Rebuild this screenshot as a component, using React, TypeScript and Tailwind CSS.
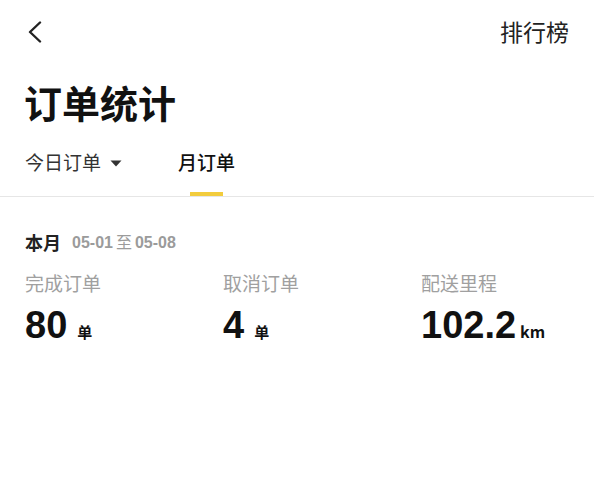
import React from 'react'

const CJK = '"Noto Sans CJK SC", "Liberation Sans", sans-serif'
const NUM = '"Liberation Sans", "Noto Sans CJK SC", sans-serif'

const stats = [
  { label: '完成订单', value: '80', unit: '单', gap: 'ml-[10px]', size: 'text-[15px]' },
  { label: '取消订单', value: '4', unit: '单', gap: 'ml-[10px]', size: 'text-[15px]' },
  { label: '配送里程', value: '102.2', unit: 'km', gap: 'ml-[4px]', size: 'text-[16px]' },
]

export default function App() {
  return (
    <div className="w-[594px] h-[500px] bg-white text-[#151515]" style={{ fontFamily: CJK }}>
      {/* top bar */}
      <div className="h-[62px] flex items-center justify-between pl-[27px] pr-[25px]">
        <svg width="16" height="22" viewBox="0 0 16 22" fill="none" className="mt-[2px]">
          <path d="M13 1.5 L3 11 L13 20.5" stroke="#222" strokeWidth="2.4" strokeLinecap="round" strokeLinejoin="round" />
        </svg>
        <span className="text-[23px] leading-none text-[#222]">排行榜</span>
      </div>

      <h1 className="mt-[21px] pl-[24px] text-[38px] leading-none font-bold text-[#111]">订单统计</h1>

      {/* tabs */}
      <div className="pt-[31px] pl-[25px] flex items-start border-b border-[#e6e6e6]">
        <div className="flex items-center h-[19px]">
          <span className="text-[19px] leading-none text-[#333]">今日订单</span>
          <svg className="ml-[9px] mt-[3px]" width="12" height="7" viewBox="0 0 12 7">
            <path d="M0.5 0.5 L11.5 0.5 L6 6.5 Z" fill="#333" />
          </svg>
        </div>
        <div className="ml-[56px] flex flex-col items-center">
          <span className="text-[19px] leading-none font-medium text-[#111]">月订单</span>
          <div className="mt-[21px] w-[33px] h-[4px] bg-[#f2cc3d]" />
        </div>
      </div>

      {/* month summary */}
      <div className="pl-[25px] pr-[25px]">
        <div className="mt-[36px] flex items-center h-[18px]">
          <span className="text-[18px] leading-none font-bold text-[#222]">本月</span>
          <span className="ml-[11px] text-[16px] leading-none font-semibold text-[#9b9b9b]" style={{ fontFamily: NUM }}>
            05-01<span style={{ fontFamily: CJK }} className="font-normal mx-[3px]">至</span>05-08
          </span>
        </div>

        <div className="mt-[22px] grid grid-cols-[198px_198px_1fr]">
          {stats.map(s => (
            <div key={s.label} className="flex flex-col">
              <span className="text-[19px] leading-none text-[#a0a0a0]">{s.label}</span>
              <div className="mt-[14px] flex items-baseline">
                <span className="text-[38px] leading-none font-bold text-[#111]" style={{ fontFamily: NUM }}>{s.value}</span>
                <span className={`${s.gap} ${s.size} leading-none font-bold text-[#111]`}>{s.unit}</span>
              </div>
            </div>
          ))}
        </div>
      </div>
    </div>
  )
}
